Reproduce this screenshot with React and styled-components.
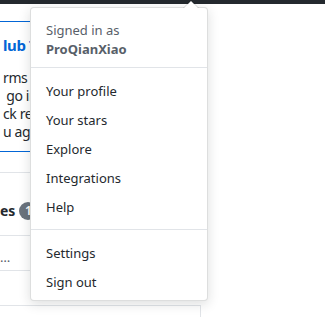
import React from 'react';
import styled, { createGlobalStyle } from 'styled-components';

const GlobalStyle = createGlobalStyle`
  html, body {
    margin: 0;
    padding: 0;
    background: #fff;
    overflow: hidden;
  }
  body {
    font-family: "Noto Sans", "Open Sans", sans-serif;
    font-size: 13px;
    color: #24292e;
  }
`;

const Page = styled.div`
  position: relative;
  width: 325px;
  height: 317px;
  overflow: hidden;
`;

const TopBar = styled.div`
  height: 4px;
  background: #24292e;
`;

const Notice = styled.div`
  margin-top: 17px;
  width: 120px;
  border-top: 1px solid #0366d6;
  border-bottom: 1px solid #0366d6;
  padding: 12px 0 10px 3px;
  letter-spacing: -0.4px;
`;

const NoticeTitle = styled.div`
  font-size: 15px;
  font-weight: 700;
  color: #0366d6;
  line-height: 22px;
  margin-bottom: 13px;
`;

const NoticeLine = styled.div`
  line-height: 18px;
  font-size: 14px;
  color: #24292e;
  white-space: pre;
`;

const Section = styled.div`
  margin-top: 20px;
  width: 200px;
`;

const Row = styled.div`
  display: flex;
  align-items: flex-start;
  gap: 4px;
  box-sizing: border-box;
  border-top: 1px solid #e1e4e8;
  height: ${p => p.h}px;
  padding-top: ${p => p.top}px;
  padding-left: ${p => p.pad || 0}px;
  line-height: 20px;
  font-size: ${p => p.bold ? 14 : 13}px;
  color: ${p => p.muted ? '#586069' : '#24292e'};
  font-weight: ${p => p.bold ? 700 : 400};
`;

const Counter = styled.span`
  display: inline-block;
  min-width: 18px;
  height: 18px;
  margin-top: 1px;
  border-radius: 9px;
  background: #6a737d;
  color: #fff;
  font-size: 12px;
  font-weight: 600;
  line-height: 18px;
  text-align: center;
`;

const Footer = styled.div`
  display: flex;
  width: 201px;
  border-top: 1px solid #e1e4e8;
  height: 20px;
`;

const FooterCell = styled.div`
  flex: 1;
  border-right: 1px solid #e1e4e8;
`;

const Dropdown = styled.div`
  position: absolute;
  left: 30px;
  top: 7px;
  width: 176px;
  padding: 4px 0;
  background: #fff;
  border: 1px solid rgba(27, 31, 35, 0.15);
  border-radius: 4px;
  box-shadow: 0 3px 12px rgba(27, 31, 35, 0.15);
  font-size: 13px;

  &::before,
  &::after {
    content: '';
    position: absolute;
    display: inline-block;
    border: solid transparent;
  }
  &::before {
    top: -16px;
    right: 8px;
    border-width: 8px;
    border-bottom-color: rgba(27, 31, 35, 0.15);
  }
  &::after {
    top: -14px;
    right: 9px;
    border-width: 7px;
    border-bottom-color: #fff;
  }
`;

const Header = styled.div`
  padding: 9px 16px 8px 15px;
  line-height: 19px;
  color: #586069;
`;

const UserName = styled.strong`
  display: block;
  color: #586069;
  font-weight: 700;
`;

const Divider = styled.div`
  height: 1px;
  margin: 8px 0;
  background: #e1e4e8;
  margin-top: ${p => p.flush ? 0 : 8}px;
`;

const Item = styled.a`
  display: block;
  padding: 5px 8px 3px 15px;
  line-height: 21px;
  color: #24292e;
  text-decoration: none;
  white-space: nowrap;
`;

export default function App() {
  return (
    <Page>
      <GlobalStyle />
      <TopBar />
      <Notice>
        <NoticeTitle>lub T</NoticeTitle>
        <NoticeLine>rms o</NoticeLine>
        <NoticeLine> go in</NoticeLine>
        <NoticeLine>ck reac</NoticeLine>
        <NoticeLine>u agre</NoticeLine>
      </Notice>
      <Section>
        <Row h={63} top={28} bold>
          es <Counter>1</Counter>
        </Row>
        <Row h={35} top={11} muted>…</Row>
        <Row h={35} top={8} pad={40} muted>Priv</Row>
      </Section>
      <Footer>
        <FooterCell />
      </Footer>

      <Dropdown>
        <Header>
          Signed in as
          <UserName>ProQianXiao</UserName>
        </Header>
        <Divider flush />
        <Item href="#">Your profile</Item>
        <Item href="#">Your stars</Item>
        <Item href="#">Explore</Item>
        <Item href="#">Integrations</Item>
        <Item href="#">Help</Item>
        <Divider />
        <Item href="#">Settings</Item>
        <Item href="#">Sign out</Item>
      </Dropdown>
    </Page>
  );
}
